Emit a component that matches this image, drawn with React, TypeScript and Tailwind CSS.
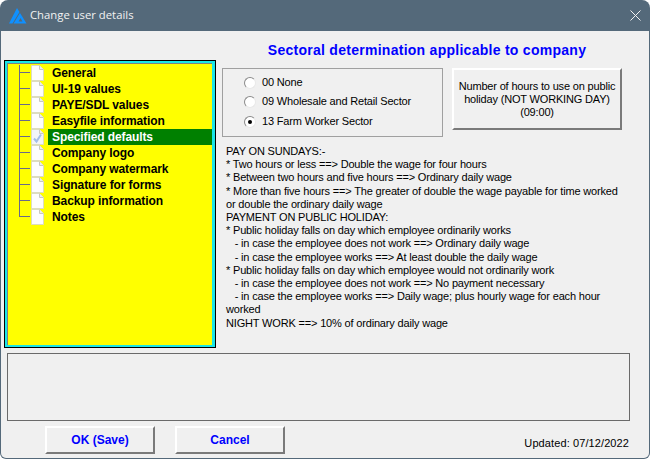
import React from "react";

const items = ["General","UI-19 values","PAYE/SDL values","Easyfile information","Specified defaults","Company logo","Company watermark","Signature for forms","Backup information","Notes"];

function Doc({ checked }: { checked?: boolean }) {
  return (
    <svg width="13" height="16" viewBox="0 0 13 16" className="shrink-0">
      <path d="M.5 .5H8.5L12.5 4.5V15.5H.5Z" fill={checked ? "#f2f4f8" : "#fdfdfd"} stroke="#dcdcc0" />
      <path d="M8.5 .5V4.5H12.5" fill="#eeeeee" stroke="#c8c8c0" />
      {checked && <path d="M3 9.5L5.5 12.5L10 5.5" fill="none" stroke="#a4bde6" strokeWidth="2" />}
    </svg>
  );
}

function Radio({ on }: { on?: boolean }) {
  return (
    <span className="w-[12px] h-[12px] rounded-full bg-white border border-t-[#8a8a8a] border-l-[#8a8a8a] border-r-[#e8e8e8] border-b-[#e8e8e8] flex items-center justify-center shrink-0">
      {on && <span className="w-[4px] h-[4px] rounded-full bg-black" />}
    </span>
  );
}

const lines = [
  "PAY ON SUNDAYS:-",
  "* Two hours or less ==> Double the wage for four hours",
  "* Between two hours and five hours ==> Ordinary daily wage",
  "* More than five hours ==> The greater of double the wage payable for time worked",
  "or double the ordinary daily wage",
  "PAYMENT ON PUBLIC HOLIDAY:",
  "* Public holiday falls on day which employee ordinarily works",
  "   - in case the employee does not work ==> Ordinary daily wage",
  "   - in case the employee works ==> At least double the daily wage",
  "* Public holiday falls on day which employee would not ordinarily work",
  "   - in case the employee does not work ==> No payment necessary",
  "   - in case the employee works ==> Daily wage; plus hourly wage for each hour",
  "worked",
  "NIGHT WORK ==> 10% of ordinary daily wage",
];

const raised = "border-2 border-t-white border-l-white border-r-[#7a7a7a] border-b-[#7a7a7a] bg-[#f0f0f0]";
const pixelBold = "font-['Liberation_Sans'] font-bold text-[12px]";

export default function App() {
  return (
    <div className="w-[650px] h-[459px] overflow-hidden bg-[#54697a] rounded-t-[8px] rounded-b-[6px] flex flex-col font-['Liberation_Sans',sans-serif] text-[11px] text-black">
      <div className="h-[31px] flex items-center shrink-0">
        <svg width="18" height="16" viewBox="0 0 18 16" className="ml-[9px]">
          <path d="M8 0L10.5 4L3.5 15.5H0Z" fill="#0f90ff" />
          <path d="M11 5L17.5 15.5H4.5Z" fill="#0f90ff" />
          <path d="M11.5 10L13.5 13.5H9.5Z" fill="#54697a" />
        </svg>
        <span className="ml-[3px] text-[11.3px] text-[#f2f2f2] font-['Open_Sans',sans-serif]">Change user details</span>
        <svg width="11" height="11" viewBox="0 0 11 11" className="ml-auto mr-[9px]">
          <path d="M.5 .5L10.5 10.5M10.5 .5L.5 10.5" stroke="#f2f2f2" fill="none" />
        </svg>
      </div>
      <div className="flex-1 min-h-0 ml-[1px] mr-[1px] mb-[1px] bg-[#f0f0f0] rounded-b-[5px] flex flex-col">
        <div className="flex h-[318px] shrink-0 pl-[3px]">
          <div className="w-[212px] mt-[29px] h-[288px] shrink-0 border border-black bg-[#19e6e6] pt-[2px] pl-[2px] pb-[2px] pr-[3px]">
            <div className="h-full bg-[#ffff00] border-t border-l border-[#808080] pt-[1px] pl-[11px] flex flex-col">
              {items.map((t, i) => (
                <div key={t} className="h-[16px] flex items-stretch shrink-0">
                  <div className="w-[11px] flex flex-col shrink-0">
                    <div className="h-[8px] border-l border-b border-[#6a6a8a]" />
                    {i < items.length - 1 && <div className="h-[8px] border-l border-[#6a6a8a]" />}
                  </div>
                  <div className="ml-[1px]"><Doc checked={t === "Specified defaults"} /></div>
                  <div className={`ml-[4px] flex-1 pl-[4px] flex items-center ${pixelBold} tracking-[-0.1px] whitespace-nowrap ${t === "Specified defaults" ? "bg-[#008000] text-white" : "text-black"}`}>{t}</div>
                </div>
              ))}
            </div>
          </div>
          <div className="flex-1 ml-[6px] flex flex-col min-w-0">
            <div className="h-[37px] pt-[10px] text-center pr-[17px] text-[#0000ff] font-['Liberation_Sans'] font-bold text-[14px] tracking-[0.27px] leading-[18px] whitespace-nowrap">
              Sectoral determination applicable to company
            </div>
            <div className="flex tracking-[-0.17px]">
              <div className="w-[221px] h-[69px] border border-[#a0a0a0] pl-[21px] flex flex-col justify-start pt-[7px] gap-[6px]">
                <div className="h-[13px] flex items-center gap-[6px] whitespace-nowrap"><Radio /><span>00 None</span></div>
                <div className="h-[13px] flex items-center gap-[6px] whitespace-nowrap"><Radio /><span>09 Wholesale and Retail Sector</span></div>
                <div className="h-[13px] mt-[1px] flex items-center gap-[6px] whitespace-nowrap"><Radio on /><span>13 Farm Worker Sector</span></div>
              </div>
              <div className={`ml-[9px] w-[170px] h-[62px] ${raised} flex items-center justify-center text-center leading-[13px]`}>
                <span>Number of hours to use on public<br />holiday (NOT WORKING DAY)<br />(09:00)</span>
              </div>
            </div>
            <div className="mt-[8px] ml-[4px] leading-[13.2px] whitespace-pre tracking-[-0.17px]">
              {lines.map((l) => <div key={l}>{l}</div>)}
            </div>
          </div>
        </div>
        <div className="ml-[6px] mr-[19px] mt-[4px] h-[68px] shrink-0 border border-[#6a6a6a]" />
        <div className="flex items-start pl-[44px] pr-[20px] mt-[5px]">
          <div className={`w-[110px] h-[28px] ${raised} flex items-center justify-center text-[#0000ff] ${pixelBold}`}>OK (Save)</div>
          <div className={`ml-[20px] w-[110px] h-[28px] ${raised} flex items-center justify-center text-[#0000ff] ${pixelBold}`}>Cancel</div>
          <div className="ml-auto mt-[9px] tracking-[0.1px]">Updated: 07/12/2022</div>
        </div>
      </div>
    </div>
  );
}
